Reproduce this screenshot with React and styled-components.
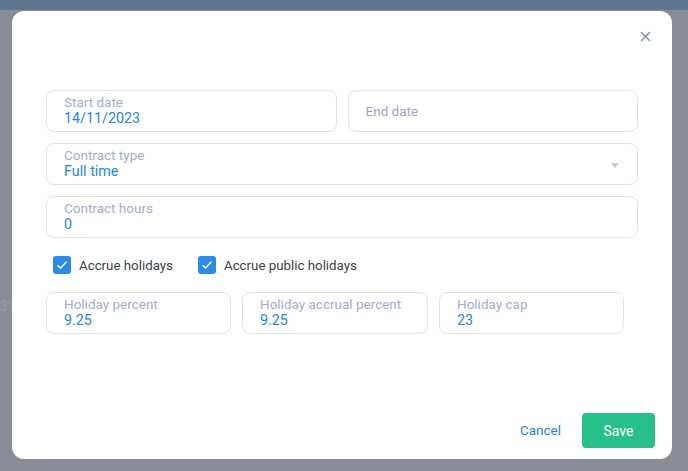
import styled, { createGlobalStyle } from "styled-components"

const GlobalStyle = createGlobalStyle`
  html, body {
    margin: 0;
    padding: 0;
    height: 100%;
  }
  body {
    font-family: Roboto, "Liberation Sans", Arial, sans-serif;
    background: #8a8d98;
    overflow: hidden;
  }
`

const Page = styled.div`
  height: 471px;
  position: relative;
`
const TopBar = styled.div`
  height: 10px;
  background: #5f7592;
`
const BackText = styled.div`
  margin-top: 288px;
  margin-left: -8px;
  font-size: 14px;
  color: #9b9ea8;
`
const Overlay = styled.div`
  position: absolute;
  inset: 0;
  padding: 11px 16px 12px 12px;
  display: flex;
`
const Modal = styled.div`
  flex: 1;
  background: #fff;
  border-radius: 12px;
  display: flex;
  flex-direction: column;
  padding: 79px 34px 11px 34px;
  position: relative;
`
const Close = styled.button`
  position: absolute;
  top: 14px;
  right: 16px;
  width: 22px;
  height: 22px;
  border: none;
  background: none;
  padding: 0;
  display: flex;
  align-items: center;
  justify-content: center;
  cursor: pointer;
`
const Form = styled.div`
  display: flex;
  flex-direction: column;
  gap: 11px;
`
const Row = styled.div`
  display: grid;
  grid-template-columns: ${p => p.$cols || "1fr"};
  gap: 11px;
`
const Field = styled.div`
  height: 42px;
  box-sizing: border-box;
  border: 1px solid #e1e3e8;
  border-radius: 8px;
  padding: 3px 17px 0;
  display: flex;
  flex-direction: column;
  justify-content: ${p => (p.$empty ? "center" : "flex-start")};
  position: relative;
`
const Label = styled.div`
  font-size: 13.5px;
  line-height: 16px;
  color: ${p => (p.$empty ? "#9aa4c4" : "#a3add0")};
  margin-bottom: ${p => (p.$empty ? "3px" : "0")};
`
const Value = styled.div`
  font-size: 14.3px;
  line-height: 17px;
  color: #1f86e8;
`
const Caret = styled.div`
  position: absolute;
  right: 18px;
  top: 19px;
  width: 0;
  height: 0;
  border-left: 4px solid transparent;
  border-right: 4px solid transparent;
  border-top: 5px solid #c9cbd1;
`
const Checks = styled.div`
  display: flex;
  gap: 25px;
  padding: 7px 0 7px 7px;
`
const Check = styled.label`
  display: flex;
  align-items: center;
  gap: 8px;
  font-size: 13.3px;
  color: #3b3f46;
`
const Box = styled.span`
  width: 18px;
  height: 18px;
  border-radius: 3px;
  background: #2b8be6;
  display: flex;
  align-items: center;
  justify-content: center;
`
const Footer = styled.div`
  margin-top: auto;
  display: flex;
  justify-content: flex-end;
  align-items: center;
  gap: 21px;
  margin-right: -17px;
`
const TextButton = styled.button`
  border: none;
  background: none;
  font-family: inherit;
  font-size: 13.5px;
  color: #1f86e8;
  padding: 0 0 2px;
  cursor: pointer;
`
const SaveButton = styled.button`
  border: none;
  background: #27c08a;
  color: #fff;
  font-family: inherit;
  font-size: 14px;
  width: 73px;
  height: 35px;
  border-radius: 4px;
  cursor: pointer;
`

const Input = ({ label, value, select }) => (
  <Field $empty={!value}>
    <Label $empty={!value}>{label}</Label>
    {value && <Value>{value}</Value>}
    {select && <Caret />}
  </Field>
)

const Tick = () => (
  <svg width="12" height="10" viewBox="0 0 12 10">
    <path d="M1.5 5.2 L4.5 8 L10.5 1.8" fill="none" stroke="#fff" strokeWidth="1.4" />
  </svg>
)

const App = () => {
  return (
    <Page>
      <GlobalStyle />
      <TopBar />
      <BackText>33%</BackText>
      <Overlay>
        <Modal>
          <Close aria-label="close">
            <svg width="11" height="11" viewBox="0 0 11 11">
              <path d="M1 1 L10 10 M10 1 L1 10" stroke="#8391b0" strokeWidth="1.5" />
            </svg>
          </Close>
          <Form>
            <Row $cols="1fr 1fr">
              <Input label="Start date" value="14/11/2023" />
              <Input label="End date" />
            </Row>
            <Row>
              <Input label="Contract type" value="Full time" select />
            </Row>
            <Row>
              <Input label="Contract hours" value="0" />
            </Row>
            <Checks>
              <Check><Box><Tick /></Box>Accrue holidays</Check>
              <Check><Box><Tick /></Box>Accrue public holidays</Check>
            </Checks>
            <Row $cols="185px 186px 185px">
              <Input label="Holiday percent" value="9.25" />
              <Input label="Holiday accrual percent" value="9.25" />
              <Input label="Holiday cap" value="23" />
            </Row>
          </Form>
          <Footer>
            <TextButton>Cancel</TextButton>
            <SaveButton>Save</SaveButton>
          </Footer>
        </Modal>
      </Overlay>
    </Page>
  )
}

export default App
